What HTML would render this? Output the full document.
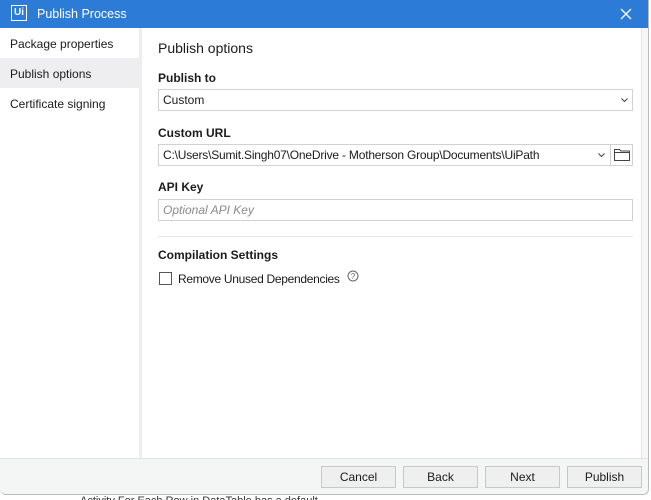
<!DOCTYPE html>
<html><head><meta charset="utf-8"><style>
*{margin:0;padding:0;box-sizing:border-box}
body{width:651px;height:500px;background:#fff;font-family:"Liberation Sans",sans-serif;font-size:12px;color:#1b1b1b;position:relative;overflow:hidden}
.a{position:absolute}
.b{font-weight:bold}
.box{position:absolute;border:1px solid #d2d2d2;background:#fff;height:22px;line-height:20px;padding-left:4px}
.btn{position:absolute;top:466px;width:60px;height:22px;border:1px solid #c8c8c8;background:#efeff0;text-align:center;line-height:20px;font-size:12px}
</style></head><body>
<div class="a" style="left:80px;top:494px;font-size:11px;color:#333;height:6px;overflow:hidden;line-height:14px">Activity For Each Row in DataTable has a default</div>
<div class="a" style="left:0;top:0;width:649px;height:495px;border-right:1px solid #bbb;border-bottom:1px solid #bbb;border-radius:0 0 6px 6px;background:#fff;overflow:hidden">
 <div class="a" style="left:0;top:0;width:649px;height:28px;background:#2c7bd6"></div>
 <div class="a" style="left:11px;top:5px;width:16px;height:16px;border:1.5px solid #fff;color:#fff;font-size:10px;line-height:13px;text-align:center;font-weight:bold">Ui</div>
 <div class="a" style="left:37px;top:7px;color:#fff;font-size:12.5px">Publish Process</div>
 <svg class="a" style="left:620px;top:8px" width="12" height="12"><path d="M1 1L11 11M11 1L1 11" stroke="#fff" stroke-width="1.3"/></svg>
 <div class="a" style="left:0;top:58px;width:139px;height:30px;background:#eeeef0"></div>
 <div class="a" style="left:10px;top:37px">Package properties</div>
 <div class="a" style="left:10px;top:67px">Publish options</div>
 <div class="a" style="left:10px;top:97px">Certificate signing</div>
 <div class="a" style="left:139px;top:28px;width:3px;height:430px;background:#eeeeee"></div>
 <div class="a" style="left:641px;top:28px;width:8px;height:430px;background:#f6f6f6;border-left:1px solid #e4e4e4"></div>
 <div class="a" style="left:158px;top:40px;font-size:14px">Publish options</div>
 <div class="a b" style="left:158px;top:71px">Publish to</div>
 <div class="box" style="left:158px;top:89px;width:475px">Custom</div>
 <svg class="a" style="left:621px;top:98px" width="7" height="5"><path d="M0.5 0.5L3.5 3.5L6.5 0.5" stroke="#444" fill="none"/></svg>
 <div class="a b" style="left:158px;top:126px">Custom URL</div>
 <div class="box" style="left:158px;top:144px;width:453px;white-space:nowrap;overflow:hidden;letter-spacing:-0.2px">C:\Users\Sumit.Singh07\OneDrive - Motherson Group\Documents\UiPath</div>
 <svg class="a" style="left:598px;top:153px" width="7" height="5"><path d="M0.5 0.5L3.5 3.5L6.5 0.5" stroke="#444" fill="none"/></svg>
 <div class="box" style="left:610px;top:144px;width:23px"></div>
 <svg class="a" style="left:614px;top:148px" width="16" height="14"><path d="M0.5 1.5H5.5L7 3H15.5V12.5H0.5Z" fill="none" stroke="#444"/><path d="M0.5 4.5H15.5" stroke="#444"/></svg>
 <div class="a b" style="left:158px;top:180px">API Key</div>
 <div class="box" style="left:158px;top:199px;width:475px;color:#8a8a8a;font-style:italic">Optional API Key</div>
 <div class="a" style="left:158px;top:236px;width:475px;height:1px;background:#e6e6e6"></div>
 <div class="a b" style="left:158px;top:248px">Compilation Settings</div>
 <div class="a" style="left:159px;top:272px;width:13px;height:13px;border:1px solid #555;background:#fff"></div>
 <div class="a" style="left:178px;top:272px;letter-spacing:-0.3px">Remove Unused Dependencies</div>
 <svg class="a" style="left:347px;top:270px" width="12" height="12"><circle cx="6" cy="6" r="5" fill="none" stroke="#666"/><text x="6" y="9" font-size="8" text-anchor="middle" fill="#666" font-family="Liberation Sans">?</text></svg>
 <div class="a" style="left:0;top:458px;width:649px;height:37px;background:#f4f5f5;border-top:1px solid #e2e2e2"></div>
 <div class="btn" style="left:321px;width:75px">Cancel</div>
 <div class="btn" style="left:403px;width:75px">Back</div>
 <div class="btn" style="left:485px;width:75px">Next</div>
 <div class="btn" style="left:567px;width:75px">Publish</div>
</div>
</body></html>
